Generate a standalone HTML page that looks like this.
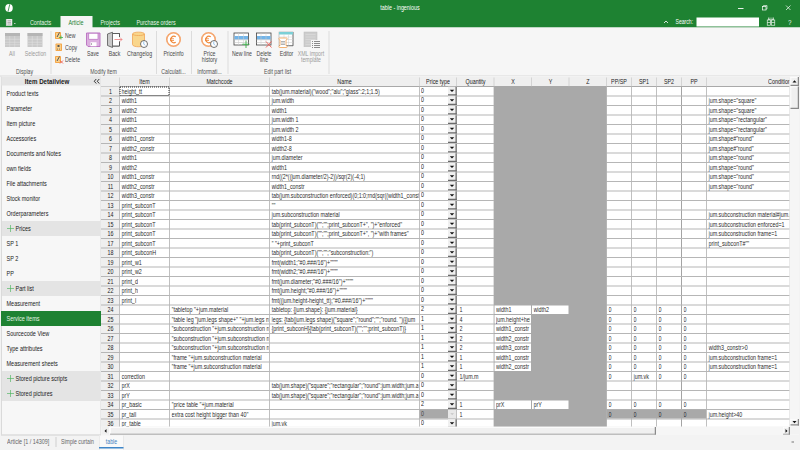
<!DOCTYPE html><html><head><meta charset="utf-8"><style>
html,body{margin:0;padding:0;width:800px;height:450px;overflow:hidden;background:#f3f3f3;}
#r{position:absolute;left:0;top:0;width:1600px;height:900px;transform:scale(0.5);transform-origin:0 0;font-family:"Liberation Sans", sans-serif;background:#f3f3f3;overflow:hidden}
.t{position:absolute;white-space:nowrap;line-height:1.5;}.u{display:inline-block;width:0.556em;height:1.5px;background:currentColor;vertical-align:-2px}
.b{position:absolute;box-sizing:border-box;}
svg{position:absolute;overflow:visible}
</style></head><body><div id="r">
<div class="b" style="left:0px;top:0px;width:1600px;height:55px;background:#1e8232;"></div>
<svg style="left:9px;top:7px" width="18" height="18" viewBox="0 0 18 18"><ellipse cx="9" cy="9" rx="7.5" ry="8" fill="#fff"/><path d="M10.5 1.5 L7 16.5" stroke="#1e8232" stroke-width="1.6"/></svg>
<div class="t" style="left:400px;width:800px;text-align:center;top:6.00px;font-size:13.38px;color:#fff;font-weight:normal;transform:scaleX(0.8000);transform-origin:50% 50%;">table - ingenious</div>
<div class="b" style="left:1476px;top:16px;width:10.5px;height:1.5px;background:#e8f0e8;"></div>
<svg style="left:1524px;top:10px" width="12" height="12" viewBox="0 0 12 12"><rect x="1" y="3" width="7" height="7" fill="none" stroke="#fff" stroke-width="1.4"/><path d="M3 3 V1 H10 V8 H8" fill="none" stroke="#fff" stroke-width="1.2"/></svg>
<svg style="left:1571px;top:10px" width="12" height="12" viewBox="0 0 12 12"><path d="M1 1 L10 10 M10 1 L1 10" stroke="#fff" stroke-width="1.4"/></svg>
<svg style="left:1327px;top:40px" width="10" height="7" viewBox="0 0 10 7"><path d="M1 6 L5 2 L9 6" fill="none" stroke="#fff" stroke-width="1.6"/></svg>
<div class="t" style="left:1351px;top:34.00px;font-size:12.75px;color:#fff;font-weight:normal;transform:scaleX(0.8000);transform-origin:0 50%;">Search:</div>
<div class="b" style="left:1393px;top:34.5px;width:125px;height:18px;background:#fff;"></div>
<svg style="left:1533px;top:34px" width="18" height="18" viewBox="0 0 18 18"><g fill="none" stroke="#e8f0e8" stroke-width="1.4"><path d="M4 1 V5 M7 1 V5 M11 1 V5 M14 1 V5 M3 5 H8 M10 5 H15"/><rect x="1.5" y="6" width="6.5" height="10.5"/><rect x="10" y="6" width="6.5" height="10.5"/><path d="M1.5 11 H8 M10 11 H16.5 M8 8 H10"/></g></svg>
<div class="t" style="left:1576px;top:34.00px;font-size:15.00px;color:#eef5ee;font-weight:normal;transform:scaleX(0.8333);transform-origin:0 50%;">?</div>
<svg style="left:12px;top:38px" width="22" height="16" viewBox="0 0 22 16"><rect x="0" y="0" width="12.5" height="13.5" fill="#ececec"/><path d="M3 3.5 H10 M3 6.75 H10 M3 10 H10" stroke="#9a9a9a" stroke-width="1.6"/><path d="M0.8 0 V13.5" stroke="#bbb" stroke-width="1.5"/><rect x="16" y="8" width="3" height="1.6" fill="#ddd"/></svg>
<div class="t" style="left:60px;top:36.00px;font-size:13.38px;color:#e8f3e8;font-weight:normal;transform:scaleX(0.8000);transform-origin:0 50%;">Contacts</div>
<div class="b" style="left:121px;top:32px;width:64px;height:24px;background:#f5f5f5;"></div>
<div class="t" style="left:137px;top:36.00px;font-size:13.38px;color:#1e8232;font-weight:normal;transform:scaleX(0.8000);transform-origin:0 50%;">Article</div>
<div class="t" style="left:201px;top:36.00px;font-size:13.38px;color:#e8f3e8;font-weight:normal;transform:scaleX(0.8000);transform-origin:0 50%;">Projects</div>
<div class="t" style="left:273px;top:36.00px;font-size:13.38px;color:#e8f3e8;font-weight:normal;transform:scaleX(0.8000);transform-origin:0 50%;">Purchase orders</div>
<div class="b" style="left:0px;top:55px;width:1600px;height:97px;background:#f6f6f6;"></div>
<div class="b" style="left:0px;top:151px;width:1600px;height:2px;background:#dadada;"></div>
<div class="b" style="left:101px;top:62px;width:1.6px;height:86px;background:#dcdcdc;"></div>
<div class="b" style="left:312px;top:62px;width:1.6px;height:86px;background:#dcdcdc;"></div>
<div class="b" style="left:382px;top:62px;width:1.6px;height:86px;background:#dcdcdc;"></div>
<div class="b" style="left:455px;top:62px;width:1.6px;height:86px;background:#dcdcdc;"></div>
<div class="b" style="left:657px;top:62px;width:1.6px;height:86px;background:#dcdcdc;"></div>
<div class="t" style="left:-351px;width:800px;text-align:center;top:134.00px;font-size:13.00px;color:#505050;font-weight:normal;transform:scaleX(0.8000);transform-origin:50% 50%;">Display</div>
<div class="t" style="left:-193px;width:800px;text-align:center;top:134.00px;font-size:13.00px;color:#505050;font-weight:normal;transform:scaleX(0.8000);transform-origin:50% 50%;">Modify item</div>
<div class="t" style="left:-53px;width:800px;text-align:center;top:134.00px;font-size:13.00px;color:#505050;font-weight:normal;transform:scaleX(0.8000);transform-origin:50% 50%;">Calculati...</div>
<div class="t" style="left:19px;width:800px;text-align:center;top:134.00px;font-size:13.00px;color:#505050;font-weight:normal;transform:scaleX(0.8000);transform-origin:50% 50%;">Informati...</div>
<div class="t" style="left:155px;width:800px;text-align:center;top:134.00px;font-size:13.00px;color:#505050;font-weight:normal;transform:scaleX(0.8000);transform-origin:50% 50%;">Edit part list</div>
<svg style="left:10px;top:66px" width="30" height="28" viewBox="0 0 30 28"><rect x="0" y="0" width="30" height="28" fill="#c9c9c9"/><rect x="0" y="0" width="30" height="6" fill="#b5b5b5"/><g stroke="#e2e2e2" stroke-width="1"><path d="M0 12.5 H30 M0 18.5 H30 M0 23.5 H30 M9.5 6 V28 M19.5 6 V28"/></g></svg>
<svg style="left:55px;top:66px" width="30" height="28" viewBox="0 0 30 28"><rect x="0" y="0" width="30" height="28" fill="#c9c9c9"/><rect x="0" y="0" width="30" height="6" fill="#b5b5b5"/><g stroke="#e2e2e2" stroke-width="1"><path d="M0 12.5 H30 M0 18.5 H30 M0 23.5 H30 M9.5 6 V28 M19.5 6 V28"/></g></svg>
<div class="t" style="left:-376px;width:800px;text-align:center;top:98.00px;font-size:13.00px;color:#9a9a9a;font-weight:normal;transform:scaleX(0.8000);transform-origin:50% 50%;">All</div>
<div class="t" style="left:-329px;width:800px;text-align:center;top:98.00px;font-size:13.00px;color:#9a9a9a;font-weight:normal;transform:scaleX(0.8000);transform-origin:50% 50%;">Selection</div>
<svg style="left:109px;top:62px" width="18" height="18" viewBox="0 0 18 18"><rect x="1" y="2" width="12" height="14" rx="1.5" fill="#f4a64a"/><rect x="3" y="4" width="8" height="10" fill="#f9d08a"/><path d="M5 12 L10 3" stroke="#555" stroke-width="2"/><path d="M13 9 V17 M9 13 H17" stroke="#3cb44b" stroke-width="1.6"/></svg>
<svg style="left:109px;top:85px" width="18" height="18" viewBox="0 0 18 18"><rect x="2" y="2" width="13" height="15" rx="1.5" fill="#f4a64a"/><rect x="4" y="4" width="9" height="11" fill="#f9d08a"/><rect x="6" y="5" width="4" height="4" fill="#555"/><circle cx="6" cy="13" r="1" fill="#555"/><circle cx="10" cy="13" r="1" fill="#555"/></svg>
<svg style="left:109px;top:110px" width="18" height="18" viewBox="0 0 18 18"><rect x="1" y="2" width="12" height="14" rx="1.5" fill="#f4a64a"/><rect x="3" y="4" width="8" height="10" fill="#f9d08a"/><path d="M5 12 L10 3" stroke="#555" stroke-width="2"/><path d="M11 11 L17 17 M17 11 L11 17" stroke="#e8453c" stroke-width="1.5"/></svg>
<div class="t" style="left:130px;top:62.00px;font-size:13.00px;color:#474747;font-weight:normal;transform:scaleX(0.8000);transform-origin:0 50%;">New</div>
<div class="t" style="left:130px;top:86.00px;font-size:13.00px;color:#474747;font-weight:normal;transform:scaleX(0.8000);transform-origin:0 50%;">Copy</div>
<div class="t" style="left:130px;top:110.00px;font-size:13.00px;color:#474747;font-weight:normal;transform:scaleX(0.8000);transform-origin:0 50%;">Delete</div>
<svg style="left:172px;top:65px" width="30" height="29" viewBox="0 0 30 29"><path d="M1 1 H28 V28 H4 L1 25 Z" fill="#dcb0df" stroke="#b86ec0" stroke-width="1.8"/><rect x="5.5" y="1.5" width="18.5" height="12" fill="#fff" stroke="#b86ec0" stroke-width="1.4"/><rect x="9" y="19.5" width="12" height="8" fill="#fff"/><rect x="10" y="22" width="2" height="2" fill="#666"/></svg>
<div class="t" style="left:-214px;width:800px;text-align:center;top:98.00px;font-size:13.00px;color:#474747;font-weight:normal;transform:scaleX(0.8000);transform-origin:50% 50%;">Save</div>
<svg style="left:212px;top:64px" width="34" height="32" viewBox="0 0 34 32"><path d="M13 3 H27 V10 M27 19 V28 H13" fill="none" stroke="#555" stroke-width="1.8"/><rect x="13" y="3" width="13" height="25" fill="#fff"/><path d="M13 3 H27 V10 M27 19 V28 H13" fill="none" stroke="#555" stroke-width="1.8"/><path d="M13 0.5 L3 4 V27 L13 31 Z" fill="#c9c9c9" stroke="#555" stroke-width="1.6"/><path d="M17 15 H32 M28 11 L32 15 L28 19" fill="none" stroke="#ee7474" stroke-width="1.5"/></svg>
<div class="t" style="left:-171px;width:800px;text-align:center;top:98.00px;font-size:13.00px;color:#474747;font-weight:normal;transform:scaleX(0.8000);transform-origin:50% 50%;">Back</div>
<svg style="left:262px;top:62px" width="36" height="36" viewBox="0 0 36 36"><path d="M3 6 C3 1 27 1 27 6 V27 C27 33 3 33 3 27 Z" fill="#f9d68c" stroke="#f0a455" stroke-width="1.6"/><path d="M3 6 C3 10 27 10 27 6" fill="none" stroke="#f0a455" stroke-width="1.6"/><circle cx="26" cy="26" r="7" fill="#fff" stroke="#444" stroke-width="1.5"/><path d="M25.5 21 V26 L28.5 29" fill="none" stroke="#5aa0e0" stroke-width="1.3"/></svg>
<div class="t" style="left:-121px;width:800px;text-align:center;top:98.00px;font-size:13.00px;color:#474747;font-weight:normal;transform:scaleX(0.8000);transform-origin:50% 50%;">Changelog</div>
<svg style="left:331px;top:63px" width="34" height="34" viewBox="0 0 34 34"><circle cx="16" cy="16" r="13.5" fill="#fff" stroke="#f4a268" stroke-width="3.2"/><circle cx="16" cy="16" r="13.5" fill="none" stroke="#f8c8a0" stroke-width="1" stroke-dasharray="1 2"/><path d="M20.5 10.5 A6.5 6.5 0 1 0 20.5 21.5" fill="none" stroke="#f08a3c" stroke-width="2.6"/><path d="M9 14.5 H17 M9 18 H17" stroke="#f08a3c" stroke-width="1.6"/></svg>
<div class="t" style="left:-53px;width:800px;text-align:center;top:98.00px;font-size:13.00px;color:#474747;font-weight:normal;transform:scaleX(0.8000);transform-origin:50% 50%;">Priceinfo</div>
<svg style="left:401px;top:63px" width="38" height="36" viewBox="0 0 38 36"><circle cx="16" cy="16" r="13.5" fill="#fff" stroke="#f4a268" stroke-width="3.2"/><circle cx="16" cy="16" r="13.5" fill="none" stroke="#f8c8a0" stroke-width="1" stroke-dasharray="1 2"/><path d="M20.5 10.5 A6.5 6.5 0 1 0 20.5 21.5" fill="none" stroke="#f08a3c" stroke-width="2.6"/><path d="M9 14.5 H17 M9 18 H17" stroke="#f08a3c" stroke-width="1.6"/><circle cx="27" cy="25" r="7" fill="#fff" stroke="#444" stroke-width="1.5"/><path d="M26.5 20 V25 L29.5 28" fill="none" stroke="#5aa0e0" stroke-width="1.3"/></svg>
<div class="t" style="left:19px;width:800px;text-align:center;top:98.00px;font-size:13.00px;color:#474747;font-weight:normal;transform:scaleX(0.8000);transform-origin:50% 50%;">Price</div>
<div class="t" style="left:19px;width:800px;text-align:center;top:110.00px;font-size:13.00px;color:#474747;font-weight:normal;transform:scaleX(0.8000);transform-origin:50% 50%;">history</div>
<svg style="left:467px;top:65px" width="34" height="32" viewBox="0 0 34 32"><rect x="1" y="1" width="29" height="24" fill="#fff" stroke="#444" stroke-width="1.6"/><rect x="2" y="7" width="27" height="7" fill="#72b4e8"/><path d="M1 14.5 H30 M1 20 H30" stroke="#bbb" stroke-width="1"/><path d="M10 1 V25 M20 1 V25" stroke="#ccc" stroke-width="1"/><path d="M25 16 V31 M17.5 23.5 H32" stroke="#3cb44b" stroke-width="1.8"/></svg>
<svg style="left:512px;top:65px" width="34" height="32" viewBox="0 0 34 32"><rect x="1" y="1" width="29" height="24" fill="#fff" stroke="#444" stroke-width="1.6"/><rect x="2" y="7" width="27" height="7" fill="#72b4e8"/><path d="M1 14.5 H30 M1 20 H30" stroke="#bbb" stroke-width="1"/><path d="M10 1 V25 M20 1 V25" stroke="#ccc" stroke-width="1"/><path d="M20 18 L31 30 M31 18 L20 30" stroke="#ec5a52" stroke-width="1.8"/></svg>
<div class="t" style="left:84px;width:800px;text-align:center;top:98.00px;font-size:13.00px;color:#474747;font-weight:normal;transform:scaleX(0.8000);transform-origin:50% 50%;">New line</div>
<div class="t" style="left:128px;width:800px;text-align:center;top:98.00px;font-size:13.00px;color:#474747;font-weight:normal;transform:scaleX(0.8000);transform-origin:50% 50%;">Delete</div>
<div class="t" style="left:128px;width:800px;text-align:center;top:110.00px;font-size:13.00px;color:#474747;font-weight:normal;transform:scaleX(0.8000);transform-origin:50% 50%;">line</div>
<svg style="left:556px;top:62px" width="34" height="36" viewBox="0 0 34 36"><rect x="2" y="2" width="28" height="27.5" fill="#fff" stroke="#999" stroke-width="1"/><path d="M2 29.5 H30 V2" fill="none" stroke="#555" stroke-width="1.4"/><rect x="2" y="2" width="28" height="5" fill="#7ccfd6"/><path d="M2 12 H30 M2 17 H30 M2 23 H30 M12 7 V29 M21 7 V29" stroke="#ccc" stroke-width="1"/><path d="M3 14 H17 C19 14 19 17 16 18 V29 C19 30 19 33 17 33 H3 C1 33 1 30 4 29 V18 C1 17 1 14 3 14 Z" fill="#fff" stroke="#f0a050" stroke-width="1.6"/><path d="M6 21 H14 M6 24 H14 M6 27 H14" stroke="#888" stroke-width="1.3"/></svg>
<div class="t" style="left:173px;width:800px;text-align:center;top:98.00px;font-size:13.00px;color:#474747;font-weight:normal;transform:scaleX(0.8000);transform-origin:50% 50%;">Editor</div>
<svg style="left:606px;top:62px" width="36" height="36" viewBox="0 0 36 36"><rect x="2" y="2" width="26" height="29.5" fill="#cdcdcd" stroke="#bdbdbd" stroke-width="1"/><path d="M5 7 H25 M5 12 H25 M5 17 H25 M5 22 H25 M5 27 H25" stroke="#dedede" stroke-width="1.2"/><rect x="16" y="18" width="20" height="18" fill="#f6f6f6"/><path d="M18 21 H20 M22 21 H34 M18 25 H20 M22 25 H34 M18 29 H20 M22 29 H34 M18 33 H20 M22 33 H34" stroke="#8a8a8a" stroke-width="2"/></svg>
<div class="t" style="left:222px;width:800px;text-align:center;top:98.00px;font-size:13.00px;color:#9a9a9a;font-weight:normal;transform:scaleX(0.8000);transform-origin:50% 50%;">XML import</div>
<div class="t" style="left:222px;width:800px;text-align:center;top:110.00px;font-size:13.00px;color:#9a9a9a;font-weight:normal;transform:scaleX(0.8000);transform-origin:50% 50%;">template</div>
<div class="b" style="left:2px;top:153px;width:200px;height:718px;background:#f7f7f7;border-left:2px solid #dadada;border-right:1px solid #dadada;border-bottom:2px solid #d0d0d0"></div>
<div class="b" style="left:3px;top:153px;width:199px;height:18px;background:#e6e6e6;"></div>
<div class="t" style="left:-306.2px;width:800px;text-align:center;top:150.00px;font-size:15.38px;color:#1a1a1a;font-weight:bold;transform:scaleX(0.8000);transform-origin:50% 50%;">Item Detailview</div>
<svg style="left:187px;top:157px" width="13" height="11" viewBox="0 0 13 11"><path d="M5.5 1 L1.5 5.5 L5.5 10 M11.5 1 L7.5 5.5 L11.5 10" fill="none" stroke="#222" stroke-width="1.8"/></svg>
<div class="t" style="left:13px;top:178.00px;font-size:13.75px;color:#1a1a1a;font-weight:normal;transform:scaleX(0.8000);transform-origin:0 50%;">Product texts</div>
<div class="t" style="left:13px;top:208.00px;font-size:13.75px;color:#1a1a1a;font-weight:normal;transform:scaleX(0.8000);transform-origin:0 50%;">Parameter</div>
<div class="t" style="left:13px;top:238.00px;font-size:13.75px;color:#1a1a1a;font-weight:normal;transform:scaleX(0.8000);transform-origin:0 50%;">Item picture</div>
<div class="t" style="left:13px;top:268.00px;font-size:13.75px;color:#1a1a1a;font-weight:normal;transform:scaleX(0.8000);transform-origin:0 50%;">Accessories</div>
<div class="t" style="left:13px;top:298.00px;font-size:13.75px;color:#1a1a1a;font-weight:normal;transform:scaleX(0.8000);transform-origin:0 50%;">Documents and Notes</div>
<div class="t" style="left:13px;top:328.00px;font-size:13.75px;color:#1a1a1a;font-weight:normal;transform:scaleX(0.8000);transform-origin:0 50%;">own fields</div>
<div class="t" style="left:13px;top:358.00px;font-size:13.75px;color:#1a1a1a;font-weight:normal;transform:scaleX(0.8000);transform-origin:0 50%;">File attachments</div>
<div class="t" style="left:13px;top:388.00px;font-size:13.75px;color:#1a1a1a;font-weight:normal;transform:scaleX(0.8000);transform-origin:0 50%;">Stock monitor</div>
<div class="t" style="left:13px;top:418.00px;font-size:13.75px;color:#1a1a1a;font-weight:normal;transform:scaleX(0.8000);transform-origin:0 50%;">Orderparameters</div>
<div class="b" style="left:4px;top:442px;width:197px;height:30px;background:#e4e4e4;"></div>
<svg style="left:13px;top:449px" width="16" height="16" viewBox="0 0 16 16"><path d="M8 1 V15 M1 8 H15" stroke="#4cb45c" stroke-width="1.3"/></svg>
<div class="t" style="left:31px;top:448.00px;font-size:13.75px;color:#1a1a1a;font-weight:normal;transform:scaleX(0.8000);transform-origin:0 50%;">Prices</div>
<div class="t" style="left:13px;top:478.00px;font-size:13.75px;color:#1a1a1a;font-weight:normal;transform:scaleX(0.8000);transform-origin:0 50%;">SP 1</div>
<div class="t" style="left:13px;top:508.00px;font-size:13.75px;color:#1a1a1a;font-weight:normal;transform:scaleX(0.8000);transform-origin:0 50%;">SP 2</div>
<div class="t" style="left:13px;top:538.00px;font-size:13.75px;color:#1a1a1a;font-weight:normal;transform:scaleX(0.8000);transform-origin:0 50%;">PP</div>
<div class="b" style="left:4px;top:562px;width:197px;height:30px;background:#e4e4e4;"></div>
<svg style="left:13px;top:569px" width="16" height="16" viewBox="0 0 16 16"><path d="M8 1 V15 M1 8 H15" stroke="#4cb45c" stroke-width="1.3"/></svg>
<div class="t" style="left:31px;top:568.00px;font-size:13.75px;color:#1a1a1a;font-weight:normal;transform:scaleX(0.8000);transform-origin:0 50%;">Part list</div>
<div class="t" style="left:13px;top:598.00px;font-size:13.75px;color:#1a1a1a;font-weight:normal;transform:scaleX(0.8000);transform-origin:0 50%;">Measurement</div>
<div class="b" style="left:2px;top:622px;width:200px;height:30px;background:#1e8232;"></div>
<div class="t" style="left:13px;top:628.00px;font-size:13.75px;color:#e4f2e4;font-weight:normal;transform:scaleX(0.8000);transform-origin:0 50%;">Service items</div>
<div class="t" style="left:13px;top:658.00px;font-size:13.75px;color:#1a1a1a;font-weight:normal;transform:scaleX(0.8000);transform-origin:0 50%;">Sourcecode View</div>
<div class="t" style="left:13px;top:688.00px;font-size:13.75px;color:#1a1a1a;font-weight:normal;transform:scaleX(0.8000);transform-origin:0 50%;">Type attributes</div>
<div class="t" style="left:13px;top:718.00px;font-size:13.75px;color:#1a1a1a;font-weight:normal;transform:scaleX(0.8000);transform-origin:0 50%;">Measurement sheets</div>
<div class="b" style="left:4px;top:742px;width:197px;height:30px;background:#e4e4e4;"></div>
<svg style="left:13px;top:749px" width="16" height="16" viewBox="0 0 16 16"><path d="M8 1 V15 M1 8 H15" stroke="#4cb45c" stroke-width="1.3"/></svg>
<div class="t" style="left:31px;top:748.00px;font-size:13.75px;color:#1a1a1a;font-weight:normal;transform:scaleX(0.8000);transform-origin:0 50%;">Stored picture scripts</div>
<div class="b" style="left:4px;top:772px;width:197px;height:30px;background:#e4e4e4;"></div>
<svg style="left:13px;top:779px" width="16" height="16" viewBox="0 0 16 16"><path d="M8 1 V15 M1 8 H15" stroke="#4cb45c" stroke-width="1.3"/></svg>
<div class="t" style="left:31px;top:778.00px;font-size:13.75px;color:#1a1a1a;font-weight:normal;transform:scaleX(0.8000);transform-origin:0 50%;">Stored pictures</div>
<div class="b" style="left:202px;top:153px;width:1396px;height:716px;background:#fff;overflow:hidden">
<div class="b" style="left:0px;top:0px;width:1378px;height:19px;background:#efefef;"></div>
<div class="b" style="left:36px;top:2px;width:2px;height:17px;background:#d4d4d4;"></div>
<div class="b" style="left:136px;top:2px;width:2px;height:17px;background:#d4d4d4;"></div>
<div class="t" style="left:-113.0px;width:400px;text-align:center;top:1.00px;font-size:13.38px;color:#222;transform:scaleX(0.8000);transform-origin:50% 50%">Item</div>
<div class="b" style="left:336px;top:2px;width:2px;height:17px;background:#d4d4d4;"></div>
<div class="t" style="left:37.0px;width:400px;text-align:center;top:1.00px;font-size:13.38px;color:#222;transform:scaleX(0.8000);transform-origin:50% 50%">Matchcode</div>
<div class="b" style="left:636px;top:2px;width:2px;height:17px;background:#d4d4d4;"></div>
<div class="t" style="left:287.0px;width:400px;text-align:center;top:1.00px;font-size:13.38px;color:#222;transform:scaleX(0.8000);transform-origin:50% 50%">Name</div>
<div class="b" style="left:710px;top:2px;width:2px;height:17px;background:#d4d4d4;"></div>
<div class="t" style="left:474.0px;width:400px;text-align:center;top:1.00px;font-size:13.38px;color:#222;transform:scaleX(0.8000);transform-origin:50% 50%">Price type</div>
<div class="b" style="left:785px;top:2px;width:2px;height:17px;background:#d4d4d4;"></div>
<div class="t" style="left:548.5px;width:400px;text-align:center;top:1.00px;font-size:13.38px;color:#222;transform:scaleX(0.8000);transform-origin:50% 50%">Quantity</div>
<div class="b" style="left:860px;top:2px;width:2px;height:17px;background:#d4d4d4;"></div>
<div class="t" style="left:623.5px;width:400px;text-align:center;top:1.00px;font-size:13.38px;color:#222;transform:scaleX(0.8000);transform-origin:50% 50%">X</div>
<div class="b" style="left:935px;top:2px;width:2px;height:17px;background:#d4d4d4;"></div>
<div class="t" style="left:698.5px;width:400px;text-align:center;top:1.00px;font-size:13.38px;color:#222;transform:scaleX(0.8000);transform-origin:50% 50%">Y</div>
<div class="b" style="left:1010px;top:2px;width:2px;height:17px;background:#d4d4d4;"></div>
<div class="t" style="left:773.5px;width:400px;text-align:center;top:1.00px;font-size:13.38px;color:#222;transform:scaleX(0.8000);transform-origin:50% 50%">Z</div>
<div class="b" style="left:1060px;top:2px;width:2px;height:17px;background:#d4d4d4;"></div>
<div class="t" style="left:836.0px;width:400px;text-align:center;top:1.00px;font-size:13.38px;color:#222;transform:scaleX(0.8000);transform-origin:50% 50%">PP/SP</div>
<div class="b" style="left:1110px;top:2px;width:2px;height:17px;background:#d4d4d4;"></div>
<div class="t" style="left:886.0px;width:400px;text-align:center;top:1.00px;font-size:13.38px;color:#222;transform:scaleX(0.8000);transform-origin:50% 50%">SP1</div>
<div class="b" style="left:1160px;top:2px;width:2px;height:17px;background:#d4d4d4;"></div>
<div class="t" style="left:936.0px;width:400px;text-align:center;top:1.00px;font-size:13.38px;color:#222;transform:scaleX(0.8000);transform-origin:50% 50%">SP2</div>
<div class="b" style="left:1210px;top:2px;width:2px;height:17px;background:#d4d4d4;"></div>
<div class="t" style="left:986.0px;width:400px;text-align:center;top:1.00px;font-size:13.38px;color:#222;transform:scaleX(0.8000);transform-origin:50% 50%">PP</div>
<div class="b" style="left:1377px;top:2px;width:2px;height:17px;background:#d4d4d4;"></div>
<div class="t" style="left:1334px;top:1.00px;font-size:13.62px;color:#1a1a1a;transform:scaleX(0.8000);transform-origin:0 50%">Conditior</div>
<div class="b" style="left:0px;top:19px;width:1378px;height:2px;background:#a9a9a9;"></div>
<div class="b" style="left:0px;top:20px;width:37px;height:684px;background:#efefef;"></div>
<div class="b" style="left:36px;top:20px;width:2px;height:682px;background:#c0c0c0;"></div>
<div class="b" style="left:136px;top:20px;width:2px;height:682px;background:#c0c0c0;"></div>
<div class="b" style="left:336px;top:20px;width:2px;height:682px;background:#c0c0c0;"></div>
<div class="b" style="left:636px;top:20px;width:2px;height:682px;background:#c0c0c0;"></div>
<div class="b" style="left:710px;top:20px;width:2px;height:682px;background:#c0c0c0;"></div>
<div class="b" style="left:785px;top:20px;width:2px;height:682px;background:#c0c0c0;"></div>
<div class="b" style="left:860px;top:20px;width:2px;height:682px;background:#c0c0c0;"></div>
<div class="b" style="left:935px;top:20px;width:2px;height:682px;background:#c0c0c0;"></div>
<div class="b" style="left:1010px;top:20px;width:2px;height:682px;background:#c0c0c0;"></div>
<div class="b" style="left:1060px;top:20px;width:2px;height:682px;background:#c0c0c0;"></div>
<div class="b" style="left:1110px;top:20px;width:2px;height:682px;background:#c0c0c0;"></div>
<div class="b" style="left:1160px;top:20px;width:2px;height:682px;background:#c0c0c0;"></div>
<div class="b" style="left:1210px;top:20px;width:2px;height:682px;background:#c0c0c0;"></div>
<div class="b" style="left:1377px;top:20px;width:2px;height:682px;background:#c0c0c0;"></div>
<div class="b" style="left:1160px;top:20px;width:2px;height:682px;background:#a4a4a4;"></div>
<div class="b" style="left:0px;top:38px;width:1378px;height:2px;background:#b6b6b6;"></div>
<div class="b" style="left:0px;top:57px;width:1378px;height:2px;background:#b6b6b6;"></div>
<div class="b" style="left:0px;top:76px;width:1378px;height:2px;background:#b6b6b6;"></div>
<div class="b" style="left:0px;top:95px;width:1378px;height:2px;background:#b6b6b6;"></div>
<div class="b" style="left:0px;top:114px;width:1378px;height:2px;background:#b6b6b6;"></div>
<div class="b" style="left:0px;top:133px;width:1378px;height:2px;background:#b6b6b6;"></div>
<div class="b" style="left:0px;top:152px;width:1378px;height:2px;background:#b6b6b6;"></div>
<div class="b" style="left:0px;top:171px;width:1378px;height:2px;background:#b6b6b6;"></div>
<div class="b" style="left:0px;top:190px;width:1378px;height:2px;background:#b6b6b6;"></div>
<div class="b" style="left:0px;top:209px;width:1378px;height:2px;background:#b6b6b6;"></div>
<div class="b" style="left:0px;top:228px;width:1378px;height:2px;background:#b6b6b6;"></div>
<div class="b" style="left:0px;top:247px;width:1378px;height:2px;background:#b6b6b6;"></div>
<div class="b" style="left:0px;top:266px;width:1378px;height:2px;background:#b6b6b6;"></div>
<div class="b" style="left:0px;top:285px;width:1378px;height:2px;background:#b6b6b6;"></div>
<div class="b" style="left:0px;top:304px;width:1378px;height:2px;background:#b6b6b6;"></div>
<div class="b" style="left:0px;top:323px;width:1378px;height:2px;background:#b6b6b6;"></div>
<div class="b" style="left:0px;top:342px;width:1378px;height:2px;background:#b6b6b6;"></div>
<div class="b" style="left:0px;top:361px;width:1378px;height:2px;background:#b6b6b6;"></div>
<div class="b" style="left:0px;top:380px;width:1378px;height:2px;background:#b6b6b6;"></div>
<div class="b" style="left:0px;top:399px;width:1378px;height:2px;background:#b6b6b6;"></div>
<div class="b" style="left:0px;top:418px;width:1378px;height:2px;background:#b6b6b6;"></div>
<div class="b" style="left:0px;top:437px;width:1378px;height:2px;background:#b6b6b6;"></div>
<div class="b" style="left:0px;top:456px;width:1378px;height:2px;background:#b6b6b6;"></div>
<div class="b" style="left:0px;top:475px;width:1378px;height:2px;background:#b6b6b6;"></div>
<div class="b" style="left:0px;top:494px;width:1378px;height:2px;background:#b6b6b6;"></div>
<div class="b" style="left:0px;top:513px;width:1378px;height:2px;background:#b6b6b6;"></div>
<div class="b" style="left:0px;top:532px;width:1378px;height:2px;background:#b6b6b6;"></div>
<div class="b" style="left:0px;top:551px;width:1378px;height:2px;background:#b6b6b6;"></div>
<div class="b" style="left:0px;top:570px;width:1378px;height:2px;background:#b6b6b6;"></div>
<div class="b" style="left:0px;top:589px;width:1378px;height:2px;background:#b6b6b6;"></div>
<div class="b" style="left:0px;top:608px;width:1378px;height:2px;background:#b6b6b6;"></div>
<div class="b" style="left:0px;top:627px;width:1378px;height:2px;background:#b6b6b6;"></div>
<div class="b" style="left:0px;top:646px;width:1378px;height:2px;background:#b6b6b6;"></div>
<div class="b" style="left:0px;top:665px;width:1378px;height:2px;background:#b6b6b6;"></div>
<div class="b" style="left:0px;top:684px;width:1378px;height:2px;background:#b6b6b6;"></div>
<div class="b" style="left:0px;top:703px;width:1378px;height:2px;background:#b6b6b6;"></div>
<div class="b" style="left:786px;top:20px;width:225px;height:682px;background:#a9a9a9;"></div>
<div class="t" style="left:-181.5px;width:400px;text-align:center;top:21.00px;font-size:13.38px;color:#222;transform:scaleX(0.8000);transform-origin:50% 50%">1</div>
<div class="t" style="left:41px;width:117.50px;overflow:hidden;top:21.00px;font-size:13.38px;color:#2c2c2c;transform:scaleX(0.8000);transform-origin:0 50%">height<i class="u"></i>tt</div>
<div class="t" style="left:341px;width:367.50px;overflow:hidden;top:21.00px;font-size:13.38px;color:#2c2c2c;transform:scaleX(0.8000);transform-origin:0 50%">tab(jum.material)(&quot;wood&quot;;&quot;alu&quot;;&quot;glass&quot;:2;1;1.5)</div>
<div class="t" style="left:640px;top:19.00px;font-size:13.38px;color:#222;transform:scaleX(0.8000);transform-origin:0 50%">0</div>
<svg style="left:694px;top:20px" width="18" height="18"><rect x="0" y="0.5" width="17.5" height="17.5" fill="#f0f0f0"/><rect x="15" y="0.5" width="2.5" height="17.5" fill="#6a6a6a"/><rect x="0" y="15.5" width="17.5" height="2.5" fill="#6a6a6a"/><path d="M3.5 6.5 H12.5 L8 10.8 Z" fill="#111"/></svg>
<div class="t" style="left:-181.5px;width:400px;text-align:center;top:39.00px;font-size:13.38px;color:#222;transform:scaleX(0.8000);transform-origin:50% 50%">2</div>
<div class="t" style="left:41px;width:117.50px;overflow:hidden;top:39.00px;font-size:13.38px;color:#2c2c2c;transform:scaleX(0.8000);transform-origin:0 50%">width1</div>
<div class="t" style="left:341px;width:367.50px;overflow:hidden;top:39.00px;font-size:13.38px;color:#2c2c2c;transform:scaleX(0.8000);transform-origin:0 50%">jum.width</div>
<div class="t" style="left:640px;top:37.00px;font-size:13.38px;color:#222;transform:scaleX(0.8000);transform-origin:0 50%">0</div>
<svg style="left:694px;top:39px" width="18" height="18"><rect x="0" y="0.5" width="17.5" height="17.5" fill="#f0f0f0"/><rect x="15" y="0.5" width="2.5" height="17.5" fill="#6a6a6a"/><rect x="0" y="15.5" width="17.5" height="2.5" fill="#6a6a6a"/><path d="M3.5 6.5 H12.5 L8 10.8 Z" fill="#111"/></svg>
<div class="t" style="left:1215px;width:202.50px;overflow:hidden;top:39.00px;font-size:13.38px;color:#2c2c2c;transform:scaleX(0.8000);transform-origin:0 50%">jum.shape=&quot;square&quot;</div>
<div class="t" style="left:-181.5px;width:400px;text-align:center;top:59.00px;font-size:13.38px;color:#222;transform:scaleX(0.8000);transform-origin:50% 50%">3</div>
<div class="t" style="left:41px;width:117.50px;overflow:hidden;top:59.00px;font-size:13.38px;color:#2c2c2c;transform:scaleX(0.8000);transform-origin:0 50%">width2</div>
<div class="t" style="left:341px;width:367.50px;overflow:hidden;top:59.00px;font-size:13.38px;color:#2c2c2c;transform:scaleX(0.8000);transform-origin:0 50%">width1</div>
<div class="t" style="left:640px;top:57.00px;font-size:13.38px;color:#222;transform:scaleX(0.8000);transform-origin:0 50%">0</div>
<svg style="left:694px;top:58px" width="18" height="18"><rect x="0" y="0.5" width="17.5" height="17.5" fill="#f0f0f0"/><rect x="15" y="0.5" width="2.5" height="17.5" fill="#6a6a6a"/><rect x="0" y="15.5" width="17.5" height="2.5" fill="#6a6a6a"/><path d="M3.5 6.5 H12.5 L8 10.8 Z" fill="#111"/></svg>
<div class="t" style="left:1215px;width:202.50px;overflow:hidden;top:59.00px;font-size:13.38px;color:#2c2c2c;transform:scaleX(0.8000);transform-origin:0 50%">jum.shape=&quot;square&quot;</div>
<div class="t" style="left:-181.5px;width:400px;text-align:center;top:77.00px;font-size:13.38px;color:#222;transform:scaleX(0.8000);transform-origin:50% 50%">4</div>
<div class="t" style="left:41px;width:117.50px;overflow:hidden;top:77.00px;font-size:13.38px;color:#2c2c2c;transform:scaleX(0.8000);transform-origin:0 50%">width1</div>
<div class="t" style="left:341px;width:367.50px;overflow:hidden;top:77.00px;font-size:13.38px;color:#2c2c2c;transform:scaleX(0.8000);transform-origin:0 50%">jum.width 1</div>
<div class="t" style="left:640px;top:75.00px;font-size:13.38px;color:#222;transform:scaleX(0.8000);transform-origin:0 50%">0</div>
<svg style="left:694px;top:77px" width="18" height="18"><rect x="0" y="0.5" width="17.5" height="17.5" fill="#f0f0f0"/><rect x="15" y="0.5" width="2.5" height="17.5" fill="#6a6a6a"/><rect x="0" y="15.5" width="17.5" height="2.5" fill="#6a6a6a"/><path d="M3.5 6.5 H12.5 L8 10.8 Z" fill="#111"/></svg>
<div class="t" style="left:1215px;width:202.50px;overflow:hidden;top:77.00px;font-size:13.38px;color:#2c2c2c;transform:scaleX(0.8000);transform-origin:0 50%">jum.shape=&quot;rectangular&quot;</div>
<div class="t" style="left:-181.5px;width:400px;text-align:center;top:97.00px;font-size:13.38px;color:#222;transform:scaleX(0.8000);transform-origin:50% 50%">5</div>
<div class="t" style="left:41px;width:117.50px;overflow:hidden;top:97.00px;font-size:13.38px;color:#2c2c2c;transform:scaleX(0.8000);transform-origin:0 50%">width2</div>
<div class="t" style="left:341px;width:367.50px;overflow:hidden;top:97.00px;font-size:13.38px;color:#2c2c2c;transform:scaleX(0.8000);transform-origin:0 50%">jum.width 2</div>
<div class="t" style="left:640px;top:95.00px;font-size:13.38px;color:#222;transform:scaleX(0.8000);transform-origin:0 50%">0</div>
<svg style="left:694px;top:96px" width="18" height="18"><rect x="0" y="0.5" width="17.5" height="17.5" fill="#f0f0f0"/><rect x="15" y="0.5" width="2.5" height="17.5" fill="#6a6a6a"/><rect x="0" y="15.5" width="17.5" height="2.5" fill="#6a6a6a"/><path d="M3.5 6.5 H12.5 L8 10.8 Z" fill="#111"/></svg>
<div class="t" style="left:1215px;width:202.50px;overflow:hidden;top:97.00px;font-size:13.38px;color:#2c2c2c;transform:scaleX(0.8000);transform-origin:0 50%">jum.shape=&quot;rectangular&quot;</div>
<div class="t" style="left:-181.5px;width:400px;text-align:center;top:115.00px;font-size:13.38px;color:#222;transform:scaleX(0.8000);transform-origin:50% 50%">6</div>
<div class="t" style="left:41px;width:117.50px;overflow:hidden;top:115.00px;font-size:13.38px;color:#2c2c2c;transform:scaleX(0.8000);transform-origin:0 50%">width1<i class="u"></i>constr</div>
<div class="t" style="left:341px;width:367.50px;overflow:hidden;top:115.00px;font-size:13.38px;color:#2c2c2c;transform:scaleX(0.8000);transform-origin:0 50%">width1-8</div>
<div class="t" style="left:640px;top:113.00px;font-size:13.38px;color:#222;transform:scaleX(0.8000);transform-origin:0 50%">0</div>
<svg style="left:694px;top:115px" width="18" height="18"><rect x="0" y="0.5" width="17.5" height="17.5" fill="#f0f0f0"/><rect x="15" y="0.5" width="2.5" height="17.5" fill="#6a6a6a"/><rect x="0" y="15.5" width="17.5" height="2.5" fill="#6a6a6a"/><path d="M3.5 6.5 H12.5 L8 10.8 Z" fill="#111"/></svg>
<div class="t" style="left:1215px;width:202.50px;overflow:hidden;top:115.00px;font-size:13.38px;color:#2c2c2c;transform:scaleX(0.8000);transform-origin:0 50%">jum.shape#&quot;round&quot;</div>
<div class="t" style="left:-181.5px;width:400px;text-align:center;top:135.00px;font-size:13.38px;color:#222;transform:scaleX(0.8000);transform-origin:50% 50%">7</div>
<div class="t" style="left:41px;width:117.50px;overflow:hidden;top:135.00px;font-size:13.38px;color:#2c2c2c;transform:scaleX(0.8000);transform-origin:0 50%">width2<i class="u"></i>constr</div>
<div class="t" style="left:341px;width:367.50px;overflow:hidden;top:135.00px;font-size:13.38px;color:#2c2c2c;transform:scaleX(0.8000);transform-origin:0 50%">width2-8</div>
<div class="t" style="left:640px;top:133.00px;font-size:13.38px;color:#222;transform:scaleX(0.8000);transform-origin:0 50%">0</div>
<svg style="left:694px;top:134px" width="18" height="18"><rect x="0" y="0.5" width="17.5" height="17.5" fill="#f0f0f0"/><rect x="15" y="0.5" width="2.5" height="17.5" fill="#6a6a6a"/><rect x="0" y="15.5" width="17.5" height="2.5" fill="#6a6a6a"/><path d="M3.5 6.5 H12.5 L8 10.8 Z" fill="#111"/></svg>
<div class="t" style="left:1215px;width:202.50px;overflow:hidden;top:135.00px;font-size:13.38px;color:#2c2c2c;transform:scaleX(0.8000);transform-origin:0 50%">jum.shape#&quot;round&quot;</div>
<div class="t" style="left:-181.5px;width:400px;text-align:center;top:153.00px;font-size:13.38px;color:#222;transform:scaleX(0.8000);transform-origin:50% 50%">8</div>
<div class="t" style="left:41px;width:117.50px;overflow:hidden;top:153.00px;font-size:13.38px;color:#2c2c2c;transform:scaleX(0.8000);transform-origin:0 50%">width1</div>
<div class="t" style="left:341px;width:367.50px;overflow:hidden;top:153.00px;font-size:13.38px;color:#2c2c2c;transform:scaleX(0.8000);transform-origin:0 50%">jum.diameter</div>
<div class="t" style="left:640px;top:151.00px;font-size:13.38px;color:#222;transform:scaleX(0.8000);transform-origin:0 50%">0</div>
<svg style="left:694px;top:153px" width="18" height="18"><rect x="0" y="0.5" width="17.5" height="17.5" fill="#f0f0f0"/><rect x="15" y="0.5" width="2.5" height="17.5" fill="#6a6a6a"/><rect x="0" y="15.5" width="17.5" height="2.5" fill="#6a6a6a"/><path d="M3.5 6.5 H12.5 L8 10.8 Z" fill="#111"/></svg>
<div class="t" style="left:1215px;width:202.50px;overflow:hidden;top:153.00px;font-size:13.38px;color:#2c2c2c;transform:scaleX(0.8000);transform-origin:0 50%">jum.shape=&quot;round&quot;</div>
<div class="t" style="left:-181.5px;width:400px;text-align:center;top:173.00px;font-size:13.38px;color:#222;transform:scaleX(0.8000);transform-origin:50% 50%">9</div>
<div class="t" style="left:41px;width:117.50px;overflow:hidden;top:173.00px;font-size:13.38px;color:#2c2c2c;transform:scaleX(0.8000);transform-origin:0 50%">width2</div>
<div class="t" style="left:341px;width:367.50px;overflow:hidden;top:173.00px;font-size:13.38px;color:#2c2c2c;transform:scaleX(0.8000);transform-origin:0 50%">width1</div>
<div class="t" style="left:640px;top:171.00px;font-size:13.38px;color:#222;transform:scaleX(0.8000);transform-origin:0 50%">0</div>
<svg style="left:694px;top:172px" width="18" height="18"><rect x="0" y="0.5" width="17.5" height="17.5" fill="#f0f0f0"/><rect x="15" y="0.5" width="2.5" height="17.5" fill="#6a6a6a"/><rect x="0" y="15.5" width="17.5" height="2.5" fill="#6a6a6a"/><path d="M3.5 6.5 H12.5 L8 10.8 Z" fill="#111"/></svg>
<div class="t" style="left:1215px;width:202.50px;overflow:hidden;top:173.00px;font-size:13.38px;color:#2c2c2c;transform:scaleX(0.8000);transform-origin:0 50%">jum.shape=&quot;round&quot;</div>
<div class="t" style="left:-181.5px;width:400px;text-align:center;top:191.00px;font-size:13.38px;color:#222;transform:scaleX(0.8000);transform-origin:50% 50%">10</div>
<div class="t" style="left:41px;width:117.50px;overflow:hidden;top:191.00px;font-size:13.38px;color:#2c2c2c;transform:scaleX(0.8000);transform-origin:0 50%">width1<i class="u"></i>constr</div>
<div class="t" style="left:341px;width:367.50px;overflow:hidden;top:191.00px;font-size:13.38px;color:#2c2c2c;transform:scaleX(0.8000);transform-origin:0 50%">rnd((2*((jum.diameter/2)-2))/sqr(2)(-4;1)</div>
<div class="t" style="left:640px;top:189.00px;font-size:13.38px;color:#222;transform:scaleX(0.8000);transform-origin:0 50%">0</div>
<svg style="left:694px;top:191px" width="18" height="18"><rect x="0" y="0.5" width="17.5" height="17.5" fill="#f0f0f0"/><rect x="15" y="0.5" width="2.5" height="17.5" fill="#6a6a6a"/><rect x="0" y="15.5" width="17.5" height="2.5" fill="#6a6a6a"/><path d="M3.5 6.5 H12.5 L8 10.8 Z" fill="#111"/></svg>
<div class="t" style="left:1215px;width:202.50px;overflow:hidden;top:191.00px;font-size:13.38px;color:#2c2c2c;transform:scaleX(0.8000);transform-origin:0 50%">jum.shape=&quot;round&quot;</div>
<div class="t" style="left:-181.5px;width:400px;text-align:center;top:211.00px;font-size:13.38px;color:#222;transform:scaleX(0.8000);transform-origin:50% 50%">11</div>
<div class="t" style="left:41px;width:117.50px;overflow:hidden;top:211.00px;font-size:13.38px;color:#2c2c2c;transform:scaleX(0.8000);transform-origin:0 50%">width2<i class="u"></i>constr</div>
<div class="t" style="left:341px;width:367.50px;overflow:hidden;top:211.00px;font-size:13.38px;color:#2c2c2c;transform:scaleX(0.8000);transform-origin:0 50%">width1<i class="u"></i>constr</div>
<div class="t" style="left:640px;top:209.00px;font-size:13.38px;color:#222;transform:scaleX(0.8000);transform-origin:0 50%">0</div>
<svg style="left:694px;top:210px" width="18" height="18"><rect x="0" y="0.5" width="17.5" height="17.5" fill="#f0f0f0"/><rect x="15" y="0.5" width="2.5" height="17.5" fill="#6a6a6a"/><rect x="0" y="15.5" width="17.5" height="2.5" fill="#6a6a6a"/><path d="M3.5 6.5 H12.5 L8 10.8 Z" fill="#111"/></svg>
<div class="t" style="left:1215px;width:202.50px;overflow:hidden;top:211.00px;font-size:13.38px;color:#2c2c2c;transform:scaleX(0.8000);transform-origin:0 50%">jum.shape=&quot;round&quot;</div>
<div class="t" style="left:-181.5px;width:400px;text-align:center;top:229.00px;font-size:13.38px;color:#222;transform:scaleX(0.8000);transform-origin:50% 50%">12</div>
<div class="t" style="left:41px;width:117.50px;overflow:hidden;top:229.00px;font-size:13.38px;color:#2c2c2c;transform:scaleX(0.8000);transform-origin:0 50%">width3<i class="u"></i>constr</div>
<div class="t" style="left:341px;width:367.50px;overflow:hidden;top:229.00px;font-size:13.38px;color:#2c2c2c;transform:scaleX(0.8000);transform-origin:0 50%">tab(jum.subconstruction enforced)(0;1:0;rnd(sqr((width1<i class="u"></i>const</div>
<div class="t" style="left:640px;top:227.00px;font-size:13.38px;color:#222;transform:scaleX(0.8000);transform-origin:0 50%">0</div>
<svg style="left:694px;top:229px" width="18" height="18"><rect x="0" y="0.5" width="17.5" height="17.5" fill="#f0f0f0"/><rect x="15" y="0.5" width="2.5" height="17.5" fill="#6a6a6a"/><rect x="0" y="15.5" width="17.5" height="2.5" fill="#6a6a6a"/><path d="M3.5 6.5 H12.5 L8 10.8 Z" fill="#111"/></svg>
<div class="t" style="left:-181.5px;width:400px;text-align:center;top:249.00px;font-size:13.38px;color:#222;transform:scaleX(0.8000);transform-origin:50% 50%">13</div>
<div class="t" style="left:41px;width:117.50px;overflow:hidden;top:249.00px;font-size:13.38px;color:#2c2c2c;transform:scaleX(0.8000);transform-origin:0 50%">print<i class="u"></i>subconT</div>
<div class="t" style="left:341px;width:367.50px;overflow:hidden;top:249.00px;font-size:13.38px;color:#2c2c2c;transform:scaleX(0.8000);transform-origin:0 50%">&quot;&quot;</div>
<div class="t" style="left:640px;top:247.00px;font-size:13.38px;color:#222;transform:scaleX(0.8000);transform-origin:0 50%">0</div>
<svg style="left:694px;top:248px" width="18" height="18"><rect x="0" y="0.5" width="17.5" height="17.5" fill="#f0f0f0"/><rect x="15" y="0.5" width="2.5" height="17.5" fill="#6a6a6a"/><rect x="0" y="15.5" width="17.5" height="2.5" fill="#6a6a6a"/><path d="M3.5 6.5 H12.5 L8 10.8 Z" fill="#111"/></svg>
<div class="t" style="left:-181.5px;width:400px;text-align:center;top:267.00px;font-size:13.38px;color:#222;transform:scaleX(0.8000);transform-origin:50% 50%">14</div>
<div class="t" style="left:41px;width:117.50px;overflow:hidden;top:267.00px;font-size:13.38px;color:#2c2c2c;transform:scaleX(0.8000);transform-origin:0 50%">print<i class="u"></i>subconT</div>
<div class="t" style="left:341px;width:367.50px;overflow:hidden;top:267.00px;font-size:13.38px;color:#2c2c2c;transform:scaleX(0.8000);transform-origin:0 50%">jum.subconstruction material</div>
<div class="t" style="left:640px;top:265.00px;font-size:13.38px;color:#222;transform:scaleX(0.8000);transform-origin:0 50%">0</div>
<svg style="left:694px;top:267px" width="18" height="18"><rect x="0" y="0.5" width="17.5" height="17.5" fill="#f0f0f0"/><rect x="15" y="0.5" width="2.5" height="17.5" fill="#6a6a6a"/><rect x="0" y="15.5" width="17.5" height="2.5" fill="#6a6a6a"/><path d="M3.5 6.5 H12.5 L8 10.8 Z" fill="#111"/></svg>
<div class="t" style="left:1215px;width:202.50px;overflow:hidden;top:267.00px;font-size:13.38px;color:#2c2c2c;transform:scaleX(0.8000);transform-origin:0 50%">jum.subconstruction material#jum.material</div>
<div class="t" style="left:-181.5px;width:400px;text-align:center;top:287.00px;font-size:13.38px;color:#222;transform:scaleX(0.8000);transform-origin:50% 50%">15</div>
<div class="t" style="left:41px;width:117.50px;overflow:hidden;top:287.00px;font-size:13.38px;color:#2c2c2c;transform:scaleX(0.8000);transform-origin:0 50%">print<i class="u"></i>subconT</div>
<div class="t" style="left:341px;width:367.50px;overflow:hidden;top:287.00px;font-size:13.38px;color:#2c2c2c;transform:scaleX(0.8000);transform-origin:0 50%">tab(print<i class="u"></i>subconT)(&quot;&quot;;&quot;&quot;;print<i class="u"></i>subconT+&quot;, &quot;)+&quot;enforced&quot;</div>
<div class="t" style="left:640px;top:285.00px;font-size:13.38px;color:#222;transform:scaleX(0.8000);transform-origin:0 50%">0</div>
<svg style="left:694px;top:286px" width="18" height="18"><rect x="0" y="0.5" width="17.5" height="17.5" fill="#f0f0f0"/><rect x="15" y="0.5" width="2.5" height="17.5" fill="#6a6a6a"/><rect x="0" y="15.5" width="17.5" height="2.5" fill="#6a6a6a"/><path d="M3.5 6.5 H12.5 L8 10.8 Z" fill="#111"/></svg>
<div class="t" style="left:1215px;width:202.50px;overflow:hidden;top:287.00px;font-size:13.38px;color:#2c2c2c;transform:scaleX(0.8000);transform-origin:0 50%">jum.subconstruction enforced=1</div>
<div class="t" style="left:-181.5px;width:400px;text-align:center;top:305.00px;font-size:13.38px;color:#222;transform:scaleX(0.8000);transform-origin:50% 50%">16</div>
<div class="t" style="left:41px;width:117.50px;overflow:hidden;top:305.00px;font-size:13.38px;color:#2c2c2c;transform:scaleX(0.8000);transform-origin:0 50%">print<i class="u"></i>subconT</div>
<div class="t" style="left:341px;width:367.50px;overflow:hidden;top:305.00px;font-size:13.38px;color:#2c2c2c;transform:scaleX(0.8000);transform-origin:0 50%">tab(print<i class="u"></i>subconT)(&quot;&quot;;&quot;&quot;;print<i class="u"></i>subconT+&quot;, &quot;)+&quot;with frames&quot;</div>
<div class="t" style="left:640px;top:303.00px;font-size:13.38px;color:#222;transform:scaleX(0.8000);transform-origin:0 50%">0</div>
<svg style="left:694px;top:305px" width="18" height="18"><rect x="0" y="0.5" width="17.5" height="17.5" fill="#f0f0f0"/><rect x="15" y="0.5" width="2.5" height="17.5" fill="#6a6a6a"/><rect x="0" y="15.5" width="17.5" height="2.5" fill="#6a6a6a"/><path d="M3.5 6.5 H12.5 L8 10.8 Z" fill="#111"/></svg>
<div class="t" style="left:1215px;width:202.50px;overflow:hidden;top:305.00px;font-size:13.38px;color:#2c2c2c;transform:scaleX(0.8000);transform-origin:0 50%">jum.subconstruction frame=1</div>
<div class="t" style="left:-181.5px;width:400px;text-align:center;top:325.00px;font-size:13.38px;color:#222;transform:scaleX(0.8000);transform-origin:50% 50%">17</div>
<div class="t" style="left:41px;width:117.50px;overflow:hidden;top:325.00px;font-size:13.38px;color:#2c2c2c;transform:scaleX(0.8000);transform-origin:0 50%">print<i class="u"></i>subconT</div>
<div class="t" style="left:341px;width:367.50px;overflow:hidden;top:325.00px;font-size:13.38px;color:#2c2c2c;transform:scaleX(0.8000);transform-origin:0 50%">&quot; &quot;+print<i class="u"></i>subconT</div>
<div class="t" style="left:640px;top:323.00px;font-size:13.38px;color:#222;transform:scaleX(0.8000);transform-origin:0 50%">0</div>
<svg style="left:694px;top:324px" width="18" height="18"><rect x="0" y="0.5" width="17.5" height="17.5" fill="#f0f0f0"/><rect x="15" y="0.5" width="2.5" height="17.5" fill="#6a6a6a"/><rect x="0" y="15.5" width="17.5" height="2.5" fill="#6a6a6a"/><path d="M3.5 6.5 H12.5 L8 10.8 Z" fill="#111"/></svg>
<div class="t" style="left:1215px;width:202.50px;overflow:hidden;top:325.00px;font-size:13.38px;color:#2c2c2c;transform:scaleX(0.8000);transform-origin:0 50%">print<i class="u"></i>subconT#&quot;&quot;</div>
<div class="t" style="left:-181.5px;width:400px;text-align:center;top:343.00px;font-size:13.38px;color:#222;transform:scaleX(0.8000);transform-origin:50% 50%">18</div>
<div class="t" style="left:41px;width:117.50px;overflow:hidden;top:343.00px;font-size:13.38px;color:#2c2c2c;transform:scaleX(0.8000);transform-origin:0 50%">print<i class="u"></i>subconH</div>
<div class="t" style="left:341px;width:367.50px;overflow:hidden;top:343.00px;font-size:13.38px;color:#2c2c2c;transform:scaleX(0.8000);transform-origin:0 50%">tab(print<i class="u"></i>subconT)(&quot;&quot;;&quot;&quot;;&quot;subconstruction:&quot;)</div>
<div class="t" style="left:640px;top:341.00px;font-size:13.38px;color:#222;transform:scaleX(0.8000);transform-origin:0 50%">0</div>
<svg style="left:694px;top:343px" width="18" height="18"><rect x="0" y="0.5" width="17.5" height="17.5" fill="#f0f0f0"/><rect x="15" y="0.5" width="2.5" height="17.5" fill="#6a6a6a"/><rect x="0" y="15.5" width="17.5" height="2.5" fill="#6a6a6a"/><path d="M3.5 6.5 H12.5 L8 10.8 Z" fill="#111"/></svg>
<div class="t" style="left:-181.5px;width:400px;text-align:center;top:363.00px;font-size:13.38px;color:#222;transform:scaleX(0.8000);transform-origin:50% 50%">19</div>
<div class="t" style="left:41px;width:117.50px;overflow:hidden;top:363.00px;font-size:13.38px;color:#2c2c2c;transform:scaleX(0.8000);transform-origin:0 50%">print<i class="u"></i>w1</div>
<div class="t" style="left:341px;width:367.50px;overflow:hidden;top:363.00px;font-size:13.38px;color:#2c2c2c;transform:scaleX(0.8000);transform-origin:0 50%">fmt(width1;&quot;#0.###/16&quot;)+&quot;&quot;&quot;&quot;</div>
<div class="t" style="left:640px;top:361.00px;font-size:13.38px;color:#222;transform:scaleX(0.8000);transform-origin:0 50%">0</div>
<svg style="left:694px;top:362px" width="18" height="18"><rect x="0" y="0.5" width="17.5" height="17.5" fill="#f0f0f0"/><rect x="15" y="0.5" width="2.5" height="17.5" fill="#6a6a6a"/><rect x="0" y="15.5" width="17.5" height="2.5" fill="#6a6a6a"/><path d="M3.5 6.5 H12.5 L8 10.8 Z" fill="#111"/></svg>
<div class="t" style="left:-181.5px;width:400px;text-align:center;top:381.00px;font-size:13.38px;color:#222;transform:scaleX(0.8000);transform-origin:50% 50%">20</div>
<div class="t" style="left:41px;width:117.50px;overflow:hidden;top:381.00px;font-size:13.38px;color:#2c2c2c;transform:scaleX(0.8000);transform-origin:0 50%">print<i class="u"></i>w2</div>
<div class="t" style="left:341px;width:367.50px;overflow:hidden;top:381.00px;font-size:13.38px;color:#2c2c2c;transform:scaleX(0.8000);transform-origin:0 50%">fmt(width2;&quot;#0.###/16&quot;)+&quot;&quot;&quot;&quot;</div>
<div class="t" style="left:640px;top:379.00px;font-size:13.38px;color:#222;transform:scaleX(0.8000);transform-origin:0 50%">0</div>
<svg style="left:694px;top:381px" width="18" height="18"><rect x="0" y="0.5" width="17.5" height="17.5" fill="#f0f0f0"/><rect x="15" y="0.5" width="2.5" height="17.5" fill="#6a6a6a"/><rect x="0" y="15.5" width="17.5" height="2.5" fill="#6a6a6a"/><path d="M3.5 6.5 H12.5 L8 10.8 Z" fill="#111"/></svg>
<div class="t" style="left:-181.5px;width:400px;text-align:center;top:401.00px;font-size:13.38px;color:#222;transform:scaleX(0.8000);transform-origin:50% 50%">21</div>
<div class="t" style="left:41px;width:117.50px;overflow:hidden;top:401.00px;font-size:13.38px;color:#2c2c2c;transform:scaleX(0.8000);transform-origin:0 50%">print<i class="u"></i>d</div>
<div class="t" style="left:341px;width:367.50px;overflow:hidden;top:401.00px;font-size:13.38px;color:#2c2c2c;transform:scaleX(0.8000);transform-origin:0 50%">fmt(jum.diameter;&quot;#0.###/16&quot;)+&quot;&quot;&quot;&quot;</div>
<div class="t" style="left:640px;top:399.00px;font-size:13.38px;color:#222;transform:scaleX(0.8000);transform-origin:0 50%">0</div>
<svg style="left:694px;top:400px" width="18" height="18"><rect x="0" y="0.5" width="17.5" height="17.5" fill="#f0f0f0"/><rect x="15" y="0.5" width="2.5" height="17.5" fill="#6a6a6a"/><rect x="0" y="15.5" width="17.5" height="2.5" fill="#6a6a6a"/><path d="M3.5 6.5 H12.5 L8 10.8 Z" fill="#111"/></svg>
<div class="t" style="left:-181.5px;width:400px;text-align:center;top:419.00px;font-size:13.38px;color:#222;transform:scaleX(0.8000);transform-origin:50% 50%">22</div>
<div class="t" style="left:41px;width:117.50px;overflow:hidden;top:419.00px;font-size:13.38px;color:#2c2c2c;transform:scaleX(0.8000);transform-origin:0 50%">print<i class="u"></i>h</div>
<div class="t" style="left:341px;width:367.50px;overflow:hidden;top:419.00px;font-size:13.38px;color:#2c2c2c;transform:scaleX(0.8000);transform-origin:0 50%">fmt(jum.height;&quot;#0.###/16&quot;)+&quot;&quot;&quot;&quot;</div>
<div class="t" style="left:640px;top:417.00px;font-size:13.38px;color:#222;transform:scaleX(0.8000);transform-origin:0 50%">0</div>
<svg style="left:694px;top:419px" width="18" height="18"><rect x="0" y="0.5" width="17.5" height="17.5" fill="#f0f0f0"/><rect x="15" y="0.5" width="2.5" height="17.5" fill="#6a6a6a"/><rect x="0" y="15.5" width="17.5" height="2.5" fill="#6a6a6a"/><path d="M3.5 6.5 H12.5 L8 10.8 Z" fill="#111"/></svg>
<div class="t" style="left:-181.5px;width:400px;text-align:center;top:439.00px;font-size:13.38px;color:#222;transform:scaleX(0.8000);transform-origin:50% 50%">23</div>
<div class="t" style="left:41px;width:117.50px;overflow:hidden;top:439.00px;font-size:13.38px;color:#2c2c2c;transform:scaleX(0.8000);transform-origin:0 50%">print<i class="u"></i>l</div>
<div class="t" style="left:341px;width:367.50px;overflow:hidden;top:439.00px;font-size:13.38px;color:#2c2c2c;transform:scaleX(0.8000);transform-origin:0 50%">fmt((jum.height-height<i class="u"></i>tt);&quot;#0.###/16&quot;)+&quot;&quot;&quot;&quot;</div>
<div class="t" style="left:640px;top:437.00px;font-size:13.38px;color:#222;transform:scaleX(0.8000);transform-origin:0 50%">0</div>
<svg style="left:694px;top:438px" width="18" height="18"><rect x="0" y="0.5" width="17.5" height="17.5" fill="#f0f0f0"/><rect x="15" y="0.5" width="2.5" height="17.5" fill="#6a6a6a"/><rect x="0" y="15.5" width="17.5" height="2.5" fill="#6a6a6a"/><path d="M3.5 6.5 H12.5 L8 10.8 Z" fill="#111"/></svg>
<div class="b" style="left:786.5px;top:457.5px;width:73px;height:17px;background:#fff;"></div>
<div class="t" style="left:790px;width:85.00px;overflow:hidden;top:457.00px;font-size:13.38px;color:#2c2c2c;transform:scaleX(0.8000);transform-origin:0 50%">width1</div>
<div class="b" style="left:861.5px;top:457.5px;width:73px;height:17px;background:#fff;"></div>
<div class="t" style="left:865px;width:85.00px;overflow:hidden;top:457.00px;font-size:13.38px;color:#2c2c2c;transform:scaleX(0.8000);transform-origin:0 50%">width2</div>
<div class="t" style="left:-181.5px;width:400px;text-align:center;top:457.00px;font-size:13.38px;color:#222;transform:scaleX(0.8000);transform-origin:50% 50%">24</div>
<div class="t" style="left:141px;width:242.50px;overflow:hidden;top:457.00px;font-size:13.38px;color:#2c2c2c;transform:scaleX(0.8000);transform-origin:0 50%">&quot;tabletop &quot;+jum.material</div>
<div class="t" style="left:341px;width:367.50px;overflow:hidden;top:457.00px;font-size:13.38px;color:#2c2c2c;transform:scaleX(0.8000);transform-origin:0 50%">tabletop: {jum.shape}: {jum.material}</div>
<div class="t" style="left:640px;top:455.00px;font-size:13.38px;color:#222;transform:scaleX(0.8000);transform-origin:0 50%">2</div>
<svg style="left:694px;top:457px" width="18" height="18"><rect x="0" y="0.5" width="17.5" height="17.5" fill="#f0f0f0"/><rect x="15" y="0.5" width="2.5" height="17.5" fill="#6a6a6a"/><rect x="0" y="15.5" width="17.5" height="2.5" fill="#6a6a6a"/><path d="M3.5 6.5 H12.5 L8 10.8 Z" fill="#111"/></svg>
<div class="t" style="left:716.5px;width:85.00px;overflow:hidden;top:457.00px;font-size:13.38px;color:#2c2c2c;transform:scaleX(0.8000);transform-origin:0 50%">1</div>
<div class="t" style="left:1015px;width:57.50px;overflow:hidden;top:457.00px;font-size:13.38px;color:#2c2c2c;transform:scaleX(0.8000);transform-origin:0 50%">0</div>
<div class="t" style="left:1065px;width:57.50px;overflow:hidden;top:457.00px;font-size:13.38px;color:#2c2c2c;transform:scaleX(0.8000);transform-origin:0 50%">0</div>
<div class="t" style="left:1115px;width:57.50px;overflow:hidden;top:457.00px;font-size:13.38px;color:#2c2c2c;transform:scaleX(0.8000);transform-origin:0 50%">0</div>
<div class="t" style="left:1165px;width:57.50px;overflow:hidden;top:457.00px;font-size:13.38px;color:#2c2c2c;transform:scaleX(0.8000);transform-origin:0 50%">0</div>
<div class="b" style="left:786.5px;top:476.5px;width:73px;height:17px;background:#fff;"></div>
<div class="t" style="left:790px;width:85.00px;overflow:hidden;top:477.00px;font-size:13.38px;color:#2c2c2c;transform:scaleX(0.8000);transform-origin:0 50%">jum.height+height</div>
<div class="t" style="left:-181.5px;width:400px;text-align:center;top:477.00px;font-size:13.38px;color:#222;transform:scaleX(0.8000);transform-origin:50% 50%">25</div>
<div class="t" style="left:141px;width:242.50px;overflow:hidden;top:477.00px;font-size:13.38px;color:#2c2c2c;transform:scaleX(0.8000);transform-origin:0 50%">&quot;table leg &quot;jum.legs shape+&quot; &quot;+jum.legs material</div>
<div class="t" style="left:341px;width:367.50px;overflow:hidden;top:477.00px;font-size:13.38px;color:#2c2c2c;transform:scaleX(0.8000);transform-origin:0 50%">legs: {tab(jum.legs shape)(&quot;square&quot;;&quot;round&quot;;&quot;&quot;;&quot;round. &quot;)({jum</div>
<div class="t" style="left:640px;top:475.00px;font-size:13.38px;color:#222;transform:scaleX(0.8000);transform-origin:0 50%">1</div>
<svg style="left:694px;top:476px" width="18" height="18"><rect x="0" y="0.5" width="17.5" height="17.5" fill="#f0f0f0"/><rect x="15" y="0.5" width="2.5" height="17.5" fill="#6a6a6a"/><rect x="0" y="15.5" width="17.5" height="2.5" fill="#6a6a6a"/><path d="M3.5 6.5 H12.5 L8 10.8 Z" fill="#111"/></svg>
<div class="t" style="left:716.5px;width:85.00px;overflow:hidden;top:477.00px;font-size:13.38px;color:#2c2c2c;transform:scaleX(0.8000);transform-origin:0 50%">4</div>
<div class="t" style="left:1015px;width:57.50px;overflow:hidden;top:477.00px;font-size:13.38px;color:#2c2c2c;transform:scaleX(0.8000);transform-origin:0 50%">0</div>
<div class="t" style="left:1065px;width:57.50px;overflow:hidden;top:477.00px;font-size:13.38px;color:#2c2c2c;transform:scaleX(0.8000);transform-origin:0 50%">0</div>
<div class="t" style="left:1115px;width:57.50px;overflow:hidden;top:477.00px;font-size:13.38px;color:#2c2c2c;transform:scaleX(0.8000);transform-origin:0 50%">0</div>
<div class="t" style="left:1165px;width:57.50px;overflow:hidden;top:477.00px;font-size:13.38px;color:#2c2c2c;transform:scaleX(0.8000);transform-origin:0 50%">0</div>
<div class="b" style="left:786.5px;top:495.5px;width:73px;height:17px;background:#fff;"></div>
<div class="t" style="left:790px;width:85.00px;overflow:hidden;top:495.00px;font-size:13.38px;color:#2c2c2c;transform:scaleX(0.8000);transform-origin:0 50%">width1<i class="u"></i>constr</div>
<div class="t" style="left:-181.5px;width:400px;text-align:center;top:495.00px;font-size:13.38px;color:#222;transform:scaleX(0.8000);transform-origin:50% 50%">26</div>
<div class="t" style="left:141px;width:242.50px;overflow:hidden;top:495.00px;font-size:13.38px;color:#2c2c2c;transform:scaleX(0.8000);transform-origin:0 50%">&quot;subconstruction &quot;+jum.subconstruction material</div>
<div class="t" style="left:341px;width:367.50px;overflow:hidden;top:495.00px;font-size:13.38px;color:#2c2c2c;transform:scaleX(0.8000);transform-origin:0 50%">{print<i class="u"></i>subconH}{tab(print<i class="u"></i>subconT)(&quot;&quot;;&quot;&quot;;print<i class="u"></i>subconT)}</div>
<div class="t" style="left:640px;top:493.00px;font-size:13.38px;color:#222;transform:scaleX(0.8000);transform-origin:0 50%">1</div>
<svg style="left:694px;top:495px" width="18" height="18"><rect x="0" y="0.5" width="17.5" height="17.5" fill="#f0f0f0"/><rect x="15" y="0.5" width="2.5" height="17.5" fill="#6a6a6a"/><rect x="0" y="15.5" width="17.5" height="2.5" fill="#6a6a6a"/><path d="M3.5 6.5 H12.5 L8 10.8 Z" fill="#111"/></svg>
<div class="t" style="left:716.5px;width:85.00px;overflow:hidden;top:495.00px;font-size:13.38px;color:#2c2c2c;transform:scaleX(0.8000);transform-origin:0 50%">2</div>
<div class="t" style="left:1015px;width:57.50px;overflow:hidden;top:495.00px;font-size:13.38px;color:#2c2c2c;transform:scaleX(0.8000);transform-origin:0 50%">0</div>
<div class="t" style="left:1065px;width:57.50px;overflow:hidden;top:495.00px;font-size:13.38px;color:#2c2c2c;transform:scaleX(0.8000);transform-origin:0 50%">0</div>
<div class="t" style="left:1115px;width:57.50px;overflow:hidden;top:495.00px;font-size:13.38px;color:#2c2c2c;transform:scaleX(0.8000);transform-origin:0 50%">0</div>
<div class="t" style="left:1165px;width:57.50px;overflow:hidden;top:495.00px;font-size:13.38px;color:#2c2c2c;transform:scaleX(0.8000);transform-origin:0 50%">0</div>
<div class="b" style="left:786.5px;top:514.5px;width:73px;height:17px;background:#fff;"></div>
<div class="t" style="left:790px;width:85.00px;overflow:hidden;top:515.00px;font-size:13.38px;color:#2c2c2c;transform:scaleX(0.8000);transform-origin:0 50%">width2<i class="u"></i>constr</div>
<div class="t" style="left:-181.5px;width:400px;text-align:center;top:515.00px;font-size:13.38px;color:#222;transform:scaleX(0.8000);transform-origin:50% 50%">27</div>
<div class="t" style="left:141px;width:242.50px;overflow:hidden;top:515.00px;font-size:13.38px;color:#2c2c2c;transform:scaleX(0.8000);transform-origin:0 50%">&quot;subconstruction &quot;+jum.subconstruction material</div>
<div class="t" style="left:640px;top:513.00px;font-size:13.38px;color:#222;transform:scaleX(0.8000);transform-origin:0 50%">1</div>
<svg style="left:694px;top:514px" width="18" height="18"><rect x="0" y="0.5" width="17.5" height="17.5" fill="#f0f0f0"/><rect x="15" y="0.5" width="2.5" height="17.5" fill="#6a6a6a"/><rect x="0" y="15.5" width="17.5" height="2.5" fill="#6a6a6a"/><path d="M3.5 6.5 H12.5 L8 10.8 Z" fill="#111"/></svg>
<div class="t" style="left:716.5px;width:85.00px;overflow:hidden;top:515.00px;font-size:13.38px;color:#2c2c2c;transform:scaleX(0.8000);transform-origin:0 50%">2</div>
<div class="t" style="left:1015px;width:57.50px;overflow:hidden;top:515.00px;font-size:13.38px;color:#2c2c2c;transform:scaleX(0.8000);transform-origin:0 50%">0</div>
<div class="t" style="left:1065px;width:57.50px;overflow:hidden;top:515.00px;font-size:13.38px;color:#2c2c2c;transform:scaleX(0.8000);transform-origin:0 50%">0</div>
<div class="t" style="left:1115px;width:57.50px;overflow:hidden;top:515.00px;font-size:13.38px;color:#2c2c2c;transform:scaleX(0.8000);transform-origin:0 50%">0</div>
<div class="t" style="left:1165px;width:57.50px;overflow:hidden;top:515.00px;font-size:13.38px;color:#2c2c2c;transform:scaleX(0.8000);transform-origin:0 50%">0</div>
<div class="b" style="left:786.5px;top:533.5px;width:73px;height:17px;background:#fff;"></div>
<div class="t" style="left:790px;width:85.00px;overflow:hidden;top:533.00px;font-size:13.38px;color:#2c2c2c;transform:scaleX(0.8000);transform-origin:0 50%">width3<i class="u"></i>constr</div>
<div class="t" style="left:-181.5px;width:400px;text-align:center;top:533.00px;font-size:13.38px;color:#222;transform:scaleX(0.8000);transform-origin:50% 50%">28</div>
<div class="t" style="left:141px;width:242.50px;overflow:hidden;top:533.00px;font-size:13.38px;color:#2c2c2c;transform:scaleX(0.8000);transform-origin:0 50%">&quot;subconstruction &quot;+jum.subconstruction material</div>
<div class="t" style="left:640px;top:531.00px;font-size:13.38px;color:#222;transform:scaleX(0.8000);transform-origin:0 50%">1</div>
<svg style="left:694px;top:533px" width="18" height="18"><rect x="0" y="0.5" width="17.5" height="17.5" fill="#f0f0f0"/><rect x="15" y="0.5" width="2.5" height="17.5" fill="#6a6a6a"/><rect x="0" y="15.5" width="17.5" height="2.5" fill="#6a6a6a"/><path d="M3.5 6.5 H12.5 L8 10.8 Z" fill="#111"/></svg>
<div class="t" style="left:716.5px;width:85.00px;overflow:hidden;top:533.00px;font-size:13.38px;color:#2c2c2c;transform:scaleX(0.8000);transform-origin:0 50%">2</div>
<div class="t" style="left:1015px;width:57.50px;overflow:hidden;top:533.00px;font-size:13.38px;color:#2c2c2c;transform:scaleX(0.8000);transform-origin:0 50%">0</div>
<div class="t" style="left:1065px;width:57.50px;overflow:hidden;top:533.00px;font-size:13.38px;color:#2c2c2c;transform:scaleX(0.8000);transform-origin:0 50%">0</div>
<div class="t" style="left:1115px;width:57.50px;overflow:hidden;top:533.00px;font-size:13.38px;color:#2c2c2c;transform:scaleX(0.8000);transform-origin:0 50%">0</div>
<div class="t" style="left:1165px;width:57.50px;overflow:hidden;top:533.00px;font-size:13.38px;color:#2c2c2c;transform:scaleX(0.8000);transform-origin:0 50%">0</div>
<div class="t" style="left:1215px;width:202.50px;overflow:hidden;top:533.00px;font-size:13.38px;color:#2c2c2c;transform:scaleX(0.8000);transform-origin:0 50%">width3<i class="u"></i>constr&gt;0</div>
<div class="b" style="left:786.5px;top:552.5px;width:73px;height:17px;background:#fff;"></div>
<div class="t" style="left:790px;width:85.00px;overflow:hidden;top:553.00px;font-size:13.38px;color:#2c2c2c;transform:scaleX(0.8000);transform-origin:0 50%">width1<i class="u"></i>constr</div>
<div class="t" style="left:-181.5px;width:400px;text-align:center;top:553.00px;font-size:13.38px;color:#222;transform:scaleX(0.8000);transform-origin:50% 50%">29</div>
<div class="t" style="left:141px;width:242.50px;overflow:hidden;top:553.00px;font-size:13.38px;color:#2c2c2c;transform:scaleX(0.8000);transform-origin:0 50%">&quot;frame &quot;+jum.subconstruction material</div>
<div class="t" style="left:640px;top:551.00px;font-size:13.38px;color:#222;transform:scaleX(0.8000);transform-origin:0 50%">1</div>
<svg style="left:694px;top:552px" width="18" height="18"><rect x="0" y="0.5" width="17.5" height="17.5" fill="#f0f0f0"/><rect x="15" y="0.5" width="2.5" height="17.5" fill="#6a6a6a"/><rect x="0" y="15.5" width="17.5" height="2.5" fill="#6a6a6a"/><path d="M3.5 6.5 H12.5 L8 10.8 Z" fill="#111"/></svg>
<div class="t" style="left:716.5px;width:85.00px;overflow:hidden;top:553.00px;font-size:13.38px;color:#2c2c2c;transform:scaleX(0.8000);transform-origin:0 50%">1</div>
<div class="t" style="left:1015px;width:57.50px;overflow:hidden;top:553.00px;font-size:13.38px;color:#2c2c2c;transform:scaleX(0.8000);transform-origin:0 50%">0</div>
<div class="t" style="left:1065px;width:57.50px;overflow:hidden;top:553.00px;font-size:13.38px;color:#2c2c2c;transform:scaleX(0.8000);transform-origin:0 50%">0</div>
<div class="t" style="left:1115px;width:57.50px;overflow:hidden;top:553.00px;font-size:13.38px;color:#2c2c2c;transform:scaleX(0.8000);transform-origin:0 50%">0</div>
<div class="t" style="left:1165px;width:57.50px;overflow:hidden;top:553.00px;font-size:13.38px;color:#2c2c2c;transform:scaleX(0.8000);transform-origin:0 50%">0</div>
<div class="t" style="left:1215px;width:202.50px;overflow:hidden;top:553.00px;font-size:13.38px;color:#2c2c2c;transform:scaleX(0.8000);transform-origin:0 50%">jum.subconstruction frame=1</div>
<div class="b" style="left:786.5px;top:571.5px;width:73px;height:17px;background:#fff;"></div>
<div class="t" style="left:790px;width:85.00px;overflow:hidden;top:571.00px;font-size:13.38px;color:#2c2c2c;transform:scaleX(0.8000);transform-origin:0 50%">width2<i class="u"></i>constr</div>
<div class="t" style="left:-181.5px;width:400px;text-align:center;top:571.00px;font-size:13.38px;color:#222;transform:scaleX(0.8000);transform-origin:50% 50%">30</div>
<div class="t" style="left:141px;width:242.50px;overflow:hidden;top:571.00px;font-size:13.38px;color:#2c2c2c;transform:scaleX(0.8000);transform-origin:0 50%">&quot;frame &quot;+jum.subconstruction material</div>
<div class="t" style="left:640px;top:569.00px;font-size:13.38px;color:#222;transform:scaleX(0.8000);transform-origin:0 50%">1</div>
<svg style="left:694px;top:571px" width="18" height="18"><rect x="0" y="0.5" width="17.5" height="17.5" fill="#f0f0f0"/><rect x="15" y="0.5" width="2.5" height="17.5" fill="#6a6a6a"/><rect x="0" y="15.5" width="17.5" height="2.5" fill="#6a6a6a"/><path d="M3.5 6.5 H12.5 L8 10.8 Z" fill="#111"/></svg>
<div class="t" style="left:716.5px;width:85.00px;overflow:hidden;top:571.00px;font-size:13.38px;color:#2c2c2c;transform:scaleX(0.8000);transform-origin:0 50%">1</div>
<div class="t" style="left:1015px;width:57.50px;overflow:hidden;top:571.00px;font-size:13.38px;color:#2c2c2c;transform:scaleX(0.8000);transform-origin:0 50%">0</div>
<div class="t" style="left:1065px;width:57.50px;overflow:hidden;top:571.00px;font-size:13.38px;color:#2c2c2c;transform:scaleX(0.8000);transform-origin:0 50%">0</div>
<div class="t" style="left:1115px;width:57.50px;overflow:hidden;top:571.00px;font-size:13.38px;color:#2c2c2c;transform:scaleX(0.8000);transform-origin:0 50%">0</div>
<div class="t" style="left:1165px;width:57.50px;overflow:hidden;top:571.00px;font-size:13.38px;color:#2c2c2c;transform:scaleX(0.8000);transform-origin:0 50%">0</div>
<div class="t" style="left:1215px;width:202.50px;overflow:hidden;top:571.00px;font-size:13.38px;color:#2c2c2c;transform:scaleX(0.8000);transform-origin:0 50%">jum.subconstruction frame=1</div>
<div class="t" style="left:-181.5px;width:400px;text-align:center;top:591.00px;font-size:13.38px;color:#222;transform:scaleX(0.8000);transform-origin:50% 50%">31</div>
<div class="t" style="left:41px;width:117.50px;overflow:hidden;top:591.00px;font-size:13.38px;color:#2c2c2c;transform:scaleX(0.8000);transform-origin:0 50%">correction</div>
<div class="t" style="left:640px;top:589.00px;font-size:13.38px;color:#222;transform:scaleX(0.8000);transform-origin:0 50%">0</div>
<svg style="left:694px;top:590px" width="18" height="18"><rect x="0" y="0.5" width="17.5" height="17.5" fill="#f0f0f0"/><rect x="15" y="0.5" width="2.5" height="17.5" fill="#6a6a6a"/><rect x="0" y="15.5" width="17.5" height="2.5" fill="#6a6a6a"/><path d="M3.5 6.5 H12.5 L8 10.8 Z" fill="#111"/></svg>
<div class="t" style="left:716.5px;width:85.00px;overflow:hidden;top:591.00px;font-size:13.38px;color:#2c2c2c;transform:scaleX(0.8000);transform-origin:0 50%">1/jum.m</div>
<div class="t" style="left:1015px;width:57.50px;overflow:hidden;top:591.00px;font-size:13.38px;color:#2c2c2c;transform:scaleX(0.8000);transform-origin:0 50%">0</div>
<div class="t" style="left:1065px;width:57.50px;overflow:hidden;top:591.00px;font-size:13.38px;color:#2c2c2c;transform:scaleX(0.8000);transform-origin:0 50%">jum.vk</div>
<div class="t" style="left:1115px;width:57.50px;overflow:hidden;top:591.00px;font-size:13.38px;color:#2c2c2c;transform:scaleX(0.8000);transform-origin:0 50%">0</div>
<div class="t" style="left:1165px;width:57.50px;overflow:hidden;top:591.00px;font-size:13.38px;color:#2c2c2c;transform:scaleX(0.8000);transform-origin:0 50%">0</div>
<div class="t" style="left:-181.5px;width:400px;text-align:center;top:609.00px;font-size:13.38px;color:#222;transform:scaleX(0.8000);transform-origin:50% 50%">32</div>
<div class="t" style="left:41px;width:117.50px;overflow:hidden;top:609.00px;font-size:13.38px;color:#2c2c2c;transform:scaleX(0.8000);transform-origin:0 50%">prX</div>
<div class="t" style="left:341px;width:367.50px;overflow:hidden;top:609.00px;font-size:13.38px;color:#2c2c2c;transform:scaleX(0.8000);transform-origin:0 50%">tab(jum.shape)(&quot;square&quot;;&quot;rectangular&quot;;&quot;round&quot;:jum.width;jum.a</div>
<div class="t" style="left:640px;top:607.00px;font-size:13.38px;color:#222;transform:scaleX(0.8000);transform-origin:0 50%">0</div>
<svg style="left:694px;top:609px" width="18" height="18"><rect x="0" y="0.5" width="17.5" height="17.5" fill="#f0f0f0"/><rect x="15" y="0.5" width="2.5" height="17.5" fill="#6a6a6a"/><rect x="0" y="15.5" width="17.5" height="2.5" fill="#6a6a6a"/><path d="M3.5 6.5 H12.5 L8 10.8 Z" fill="#111"/></svg>
<div class="t" style="left:-181.5px;width:400px;text-align:center;top:629.00px;font-size:13.38px;color:#222;transform:scaleX(0.8000);transform-origin:50% 50%">33</div>
<div class="t" style="left:41px;width:117.50px;overflow:hidden;top:629.00px;font-size:13.38px;color:#2c2c2c;transform:scaleX(0.8000);transform-origin:0 50%">prY</div>
<div class="t" style="left:341px;width:367.50px;overflow:hidden;top:629.00px;font-size:13.38px;color:#2c2c2c;transform:scaleX(0.8000);transform-origin:0 50%">tab(jum.shape)(&quot;square&quot;;&quot;rectangular&quot;;&quot;round&quot;:jum.width;jum.a</div>
<div class="t" style="left:640px;top:627.00px;font-size:13.38px;color:#222;transform:scaleX(0.8000);transform-origin:0 50%">0</div>
<svg style="left:694px;top:628px" width="18" height="18"><rect x="0" y="0.5" width="17.5" height="17.5" fill="#f0f0f0"/><rect x="15" y="0.5" width="2.5" height="17.5" fill="#6a6a6a"/><rect x="0" y="15.5" width="17.5" height="2.5" fill="#6a6a6a"/><path d="M3.5 6.5 H12.5 L8 10.8 Z" fill="#111"/></svg>
<div class="b" style="left:786.5px;top:647.5px;width:73px;height:17px;background:#fff;"></div>
<div class="t" style="left:790px;width:85.00px;overflow:hidden;top:647.00px;font-size:13.38px;color:#2c2c2c;transform:scaleX(0.8000);transform-origin:0 50%">prX</div>
<div class="b" style="left:861.5px;top:647.5px;width:73px;height:17px;background:#fff;"></div>
<div class="t" style="left:865px;width:85.00px;overflow:hidden;top:647.00px;font-size:13.38px;color:#2c2c2c;transform:scaleX(0.8000);transform-origin:0 50%">prY</div>
<div class="t" style="left:-181.5px;width:400px;text-align:center;top:647.00px;font-size:13.38px;color:#222;transform:scaleX(0.8000);transform-origin:50% 50%">34</div>
<div class="t" style="left:41px;width:117.50px;overflow:hidden;top:647.00px;font-size:13.38px;color:#2c2c2c;transform:scaleX(0.8000);transform-origin:0 50%">pr<i class="u"></i>basic</div>
<div class="t" style="left:141px;width:242.50px;overflow:hidden;top:647.00px;font-size:13.38px;color:#2c2c2c;transform:scaleX(0.8000);transform-origin:0 50%">&quot;price table &quot;+jum.material</div>
<div class="t" style="left:640px;top:645.00px;font-size:13.38px;color:#222;transform:scaleX(0.8000);transform-origin:0 50%">2</div>
<svg style="left:694px;top:647px" width="18" height="18"><rect x="0" y="0.5" width="17.5" height="17.5" fill="#f0f0f0"/><rect x="15" y="0.5" width="2.5" height="17.5" fill="#6a6a6a"/><rect x="0" y="15.5" width="17.5" height="2.5" fill="#6a6a6a"/><path d="M3.5 6.5 H12.5 L8 10.8 Z" fill="#111"/></svg>
<div class="t" style="left:716.5px;width:85.00px;overflow:hidden;top:647.00px;font-size:13.38px;color:#2c2c2c;transform:scaleX(0.8000);transform-origin:0 50%">1</div>
<div class="t" style="left:1015px;width:57.50px;overflow:hidden;top:647.00px;font-size:13.38px;color:#2c2c2c;transform:scaleX(0.8000);transform-origin:0 50%">0</div>
<div class="t" style="left:1065px;width:57.50px;overflow:hidden;top:647.00px;font-size:13.38px;color:#2c2c2c;transform:scaleX(0.8000);transform-origin:0 50%">0</div>
<div class="t" style="left:1115px;width:57.50px;overflow:hidden;top:647.00px;font-size:13.38px;color:#2c2c2c;transform:scaleX(0.8000);transform-origin:0 50%">0</div>
<div class="t" style="left:1165px;width:57.50px;overflow:hidden;top:647.00px;font-size:13.38px;color:#2c2c2c;transform:scaleX(0.8000);transform-origin:0 50%">0</div>
<div class="b" style="left:637px;top:666px;width:72.5px;height:17.5px;background:#a9a9a9;"></div>
<div class="b" style="left:1011px;top:666px;width:198.5px;height:17.5px;background:#a9a9a9;"></div>
<div class="t" style="left:-181.5px;width:400px;text-align:center;top:667.00px;font-size:13.38px;color:#222;transform:scaleX(0.8000);transform-origin:50% 50%">35</div>
<div class="t" style="left:41px;width:117.50px;overflow:hidden;top:667.00px;font-size:13.38px;color:#2c2c2c;transform:scaleX(0.8000);transform-origin:0 50%">pr<i class="u"></i>tall</div>
<div class="t" style="left:141px;width:242.50px;overflow:hidden;top:667.00px;font-size:13.38px;color:#2c2c2c;transform:scaleX(0.8000);transform-origin:0 50%">extra cost height bigger than 40&quot;</div>
<div class="t" style="left:640px;top:665.00px;font-size:13.38px;color:#444;transform:scaleX(0.8000);transform-origin:0 50%">0</div>
<svg style="left:694px;top:666px" width="17" height="18"><rect x="0" y="0.5" width="16" height="17" fill="#e8e8e8"/><path d="M4.5 7.5 H12 L8.25 11 Z" fill="#c4c4c4"/></svg>
<div class="t" style="left:716.5px;width:85.00px;overflow:hidden;top:667.00px;font-size:13.38px;color:#2c2c2c;transform:scaleX(0.8000);transform-origin:0 50%">1</div>
<div class="t" style="left:1015px;width:57.50px;overflow:hidden;top:667.00px;font-size:13.38px;color:#2c2c2c;transform:scaleX(0.8000);transform-origin:0 50%">0</div>
<div class="t" style="left:1065px;width:57.50px;overflow:hidden;top:667.00px;font-size:13.38px;color:#2c2c2c;transform:scaleX(0.8000);transform-origin:0 50%">0</div>
<div class="t" style="left:1115px;width:57.50px;overflow:hidden;top:667.00px;font-size:13.38px;color:#2c2c2c;transform:scaleX(0.8000);transform-origin:0 50%">0</div>
<div class="t" style="left:1165px;width:57.50px;overflow:hidden;top:667.00px;font-size:13.38px;color:#2c2c2c;transform:scaleX(0.8000);transform-origin:0 50%">0</div>
<div class="t" style="left:1215px;width:202.50px;overflow:hidden;top:667.00px;font-size:13.38px;color:#2c2c2c;transform:scaleX(0.8000);transform-origin:0 50%">jum.height&gt;40</div>
<div class="t" style="left:-181.5px;width:400px;text-align:center;top:685.00px;font-size:13.38px;color:#222;transform:scaleX(0.8000);transform-origin:50% 50%">36</div>
<div class="t" style="left:41px;width:117.50px;overflow:hidden;top:685.00px;font-size:13.38px;color:#2c2c2c;transform:scaleX(0.8000);transform-origin:0 50%">pr<i class="u"></i>table</div>
<div class="t" style="left:341px;width:367.50px;overflow:hidden;top:685.00px;font-size:13.38px;color:#2c2c2c;transform:scaleX(0.8000);transform-origin:0 50%">jum.vk</div>
<div class="t" style="left:640px;top:683.00px;font-size:13.38px;color:#222;transform:scaleX(0.8000);transform-origin:0 50%">0</div>
<svg style="left:694px;top:685px" width="18" height="18"><rect x="0" y="0.5" width="17.5" height="17.5" fill="#f0f0f0"/><rect x="15" y="0.5" width="2.5" height="17.5" fill="#6a6a6a"/><rect x="0" y="15.5" width="17.5" height="2.5" fill="#6a6a6a"/><path d="M3.5 6.5 H12.5 L8 10.8 Z" fill="#111"/></svg>
<svg style="left:37px;top:20px" width="100" height="19"><rect x="1" y="1" width="98" height="17" fill="none" stroke="#333" stroke-width="2" stroke-dasharray="2 2"/></svg>
<div class="b" style="left:1377px;top:0px;width:21px;height:702px;background:#f6f6f6;"></div>
<div class="b" style="left:1379px;top:0px;width:19px;height:702px;background:#f6f6f6;"></div>
<svg style="left:1379px;top:1px" width="17" height="18"><rect x="0" y="0" width="17" height="18" fill="#f0f0f0"/><rect x="0" y="0" width="17" height="1.5" fill="#fff"/><rect x="0" y="0" width="1.5" height="18" fill="#fff"/><rect x="14.5" y="0" width="2.5" height="18" fill="#8a8a8a"/><rect x="0" y="15.5" width="17" height="2.5" fill="#8a8a8a"/><path d="M4 11 H12 L8 6.5 Z" fill="#111"/></svg>
<svg style="left:1379px;top:20px" width="17" height="45"><rect x="0" y="0" width="17" height="45" fill="#f0f0f0"/><rect x="0" y="0" width="17" height="1.5" fill="#fff"/><rect x="0" y="0" width="1.5" height="45" fill="#fff"/><rect x="14.5" y="0" width="2.5" height="45" fill="#8a8a8a"/><rect x="0" y="42.5" width="17" height="2.5" fill="#8a8a8a"/></svg>
<svg style="left:1379px;top:685px" width="17" height="13"><rect x="0" y="0" width="17" height="13" fill="#f0f0f0"/><rect x="0" y="0" width="17" height="1.5" fill="#fff"/><rect x="0" y="0" width="1.5" height="13" fill="#fff"/><rect x="14.5" y="0" width="2.5" height="13" fill="#8a8a8a"/><rect x="0" y="10.5" width="17" height="2.5" fill="#8a8a8a"/><path d="M4 4 H12 L8 8.5 Z" fill="#111"/></svg>
<div class="b" style="left:0px;top:700px;width:1398px;height:17px;background:#f3f3f3;"></div>
<div class="b" style="left:0px;top:701px;width:1378px;height:16px;background:#f6f6f6;"></div>
<svg style="left:1px;top:701px" width="17" height="16"><rect x="0" y="0" width="17" height="16" fill="#f0f0f0"/><path d="M10 4 V11.5 L6 7.75 Z" fill="#111"/><rect x="15.5" y="0" width="1.5" height="16" fill="#fff"/></svg>
<svg style="left:18px;top:701px" width="1092" height="16"><rect x="0" y="0" width="1092" height="16" fill="#f0f0f0"/><rect x="0" y="0" width="1092" height="1.5" fill="#fff"/><rect x="0" y="0" width="1.5" height="16" fill="#fff"/><rect x="1089.5" y="0" width="2.5" height="16" fill="#8a8a8a"/><rect x="0" y="13.5" width="1092" height="2.5" fill="#8a8a8a"/></svg>
<svg style="left:1364px;top:701px" width="14" height="16"><rect x="0" y="0" width="14" height="16" fill="#f0f0f0"/><rect x="0" y="0" width="14" height="1.5" fill="#fff"/><rect x="0" y="0" width="1.5" height="16" fill="#fff"/><rect x="11.5" y="0" width="2.5" height="16" fill="#8a8a8a"/><rect x="0" y="13.5" width="14" height="2.5" fill="#8a8a8a"/><path d="M5 4 V11.5 L9 7.75 Z" fill="#111"/></svg>
</div>
<div class="b" style="left:1583px;top:883px;width:5px;height:1.5px;background:#777;"></div>
<div class="t" style="left:14px;top:874.00px;font-size:13.62px;color:#666;font-weight:normal;transform:scaleX(0.8000);transform-origin:0 50%;">Article [1 / 14309]</div>
<div class="b" style="left:111px;top:874px;width:1.5px;height:20px;background:#cfcfcf;"></div>
<div class="t" style="left:122px;top:874.00px;font-size:13.00px;color:#666;font-weight:normal;transform:scaleX(0.8000);transform-origin:0 50%;">Simple curtain</div>
<div class="b" style="left:198px;top:871px;width:49px;height:29px;background:#f9f9f9;border-left:1px solid #ddd;border-right:1px solid #ddd"></div>
<div class="b" style="left:198px;top:894px;width:49px;height:2.5px;background:#3f86c8;"></div>
<div class="t" style="left:-177.5px;width:800px;text-align:center;top:874.00px;font-size:13.00px;color:#3f7fc0;font-weight:normal;transform:scaleX(0.8000);transform-origin:50% 50%;">table</div>
</div></body></html>
